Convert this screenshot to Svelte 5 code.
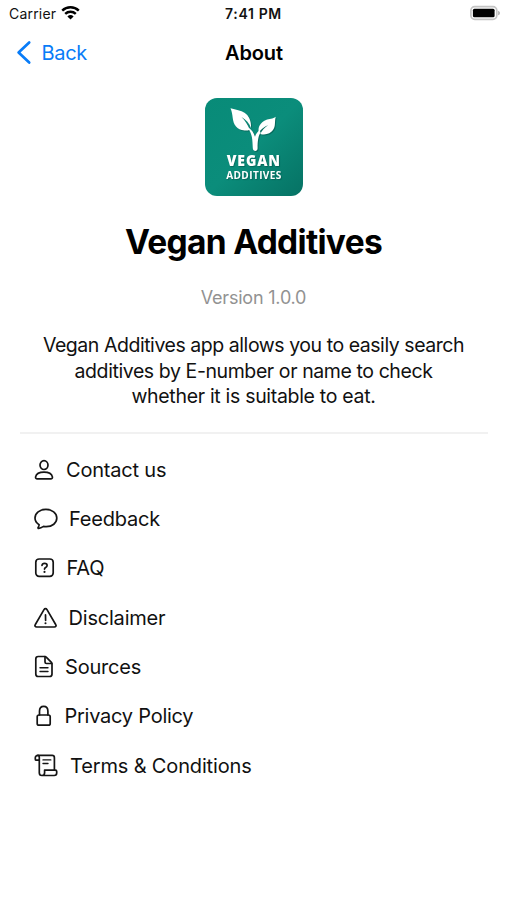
<script>
  const items = [
    { icon: 'person', label: 'Contact us', width: 20, gap: 12 },
    { icon: 'bubble', label: 'Feedback', width: 24, gap: 11 },
    { icon: 'question', label: 'FAQ', width: 21, gap: 11.5 },
    { icon: 'warning', label: 'Disclaimer', width: 23, gap: 11.5 },
    { icon: 'document', label: 'Sources', width: 20, gap: 11 },
    { icon: 'lock', label: 'Privacy Policy', width: 20, gap: 10.5 },
    { icon: 'scroll', label: 'Terms & Conditions', width: 24, gap: 12 }
  ];
</script>

<main class="screen">
  <div class="status">
    <div class="carrier">
      <span>Carrier</span>
      <svg width="19" height="14" viewBox="0 0 19 14" fill="none" stroke="#000" stroke-width="2.4">
        <path d="M1.2 4.6a12 12 0 0 1 16.6 0M4.2 7.900a7.6 7.6 0 0 1 10.6 0" />
        <path d="M9.5 13.4 6.4 10.4a4.6 4.6 0 0 1 6.2 0Z" fill="#000" stroke="none" />
      </svg>
    </div>
    <span class="time">7:41 PM</span>
    <div class="battery">
      <svg width="32" height="16" viewBox="0 0 32 16">
        <rect x="1.9" y="1.700" width="25.900" height="12.6" rx="3.8" fill="#fff" stroke="#c4c4c4" stroke-width="1.7" />
        <rect x="3.900" y="3.700" width="21.700" height="8.6" rx="1.5" fill="#000" />
        <path d="M29.2 5.7c2.2.8 2.2 3.8 0 4.6Z" fill="#aaa" />
      </svg>
    </div>
  </div>

  <nav>
    <div class="back">
      <svg width="16" height="25" viewBox="0 0 16 25" fill="none" stroke="#087cf8" stroke-width="2.7" stroke-linecap="round" stroke-linejoin="round">
        <path d="M13.2 2.4 2.6 12.5l10.6 10.1" />
      </svg>
      <span>Back</span>
    </div>
    <span class="heading">About</span>
    <div></div>
  </nav>

  <div class="logo">
    <svg width="48" height="46" viewBox="0 0 48 46" fill="#fff">
      <path d="M.5 1.300C6 3 11 3.500 14.500 5.700c4.500 2.800 6.800 8 6.600 15.600C19.500 16.500 16 12.500 11.500 10c3.600 3.600 6.500 8 8.200 12.700-1.500.8-3.200.9-5.200.8C10.500 23.100 7.800 21.700 6 19.500 1.700 14.400 3.500 8 .5 1.300Z" />
      <path d="M45.700 9.700c-1.300 5 .2 9.500-2.700 13.300-2.400 3.600-7.500 5.400-12.800 3.900 1.800-3.400 4.500-6.400 8-8.900-4 1.900-7.200 4.200-9.400 7.400-1.100-5.400 1.400-9.700 7.200-12.400 3.200-1.500 7-.9 9.700-3.300Z" />
      <path d="M18.500 20.500c3.300 2.400 5.300 5.500 6.500 9.300.9-3 2.300-4.600 4.200-6.300l1.500 1.700c-2.500 4-3.100 8.400-3.100 16 0 3.600-4.500 3.600-4.800 0-.3-8-.4-14.500-4.800-19.700Z" />
    </svg>
    <span class="vegan">VEGAN</span>
    <span class="additives">ADDITIVES</span>
  </div>

  <h1>Vegan Additives</h1>
  <p class="version">Version 1.0.0</p>
  <p class="description">
    <span class="l1">Vegan Additives app allows you to easily search</span><br />
    <span class="l2">additives by E-number or name to check</span><br />
    <span class="l3">whether it is suitable to eat.</span>
  </p>

  <hr />

  <ul>
    {#each items as item}
      <li style="gap: {item.gap}px">
        <svg width={item.width} height="24" viewBox="0 0 {item.width} 24" fill="none" stroke="#151515" stroke-width="1.7" stroke-linecap="round" stroke-linejoin="round">
          {#if item.icon === 'person'}
            <ellipse cx="10" cy="7.100" rx="4" ry="4.400" />
            <path d="M3.300 20.800c-1.400 0-1.900-.8-1.700-1.900.6-2.700 4-4.700 8.400-4.700s7.800 2 8.400 4.700c.2 1.100-.3 1.900-1.700 1.900Z" />
          {:else if item.icon === 'bubble'}
            <path d="M11.900 2.400c6.200 0 10.900 3.800 10.900 8.700s-4.500 8.600-10.500 8.600c-1 0-1.900-.1-2.700-.3-1.400.9-3 1.900-4.800 2-.8 0-1-.6-.6-1.100.6-.8 1-1.700.9-2.600C2.600 16.200 1 14 1 11.100c0-4.900 4.700-8.700 10.900-8.700Z" />
          {:else if item.icon === 'question'}
            <rect x="1.800" y="3" width="17.400" height="17.400" rx="3.300" />
            <path d="M8 9.400c.2-1.300 1.100-2 2.500-2s2.600.8 2.600 2c0 1.100-.7 1.600-1.500 2.100-.8.500-1.100.9-1.100 1.600" />
            <circle cx="10.500" cy="15.900" r="1.050" fill="#151515" stroke="none" />
          {:else if item.icon === 'warning'}
            <path d="M10 3.600c.7-1.200 2.300-1.200 3 0l8.800 15.100c.7 1.100-.1 2.300-1.400 2.300H2.600c-1.300 0-2.100-1.200-1.400-2.300Z" />
            <path d="m11.500 8.900.1 5.400" />
            <circle cx="11.500" cy="17.300" r="1.050" fill="#151515" stroke="none" />
          {:else if item.icon === 'document'}
            <path d="M11 1.500H4.200C2.600 1.500 1.800 2.400 1.800 4v15c0 1.600.8 2.500 2.400 2.500h11.400c1.600 0 2.400-.9 2.400-2.500V8.700c0-.6-.2-1-.6-1.400l-5.200-5.200c-.4-.4-.7-.6-1.200-.6Z" />
            <path d="M11 1.700V7c0 1 .5 1.500 1.500 1.500h5.200" />
            <path d="M6 12.700h8M6 16.500h8" stroke-width="1.400" />
          {:else if item.icon === 'lock'}
            <rect x="3.200" y="11" width="13" height="10.200" rx="1.800" />
            <path d="M5.500 11V7.200c0-3 1.700-4.800 4.200-4.800s4.200 1.800 4.200 4.800V11" />
          {:else}
            <path d="M3.900 1.400h14.200c1.500 0 2.300.8 2.300 2.300v12.200M5.300 6.500v12.300c0 1.800.8 2.700 2.500 2.700h12.400c1.600 0 2.500-.8 2.500-2.400v-1.700c0-.8-.5-1.300-1.300-1.300H10.600v2.700c0 1.600-.9 2.700-2.600 2.700" />
            <path d="M3.800 1.400c-1.500 0-2.500.9-2.500 2.300v1.500c0 .7.300 1 1 1h3V3.500c0-1.300-.4-2.100-1.500-2.100Z" />
            <path d="M9 5.900h7.800M9 9.500h5" stroke-width="1.400" />
          {/if}
        </svg>
        <span class={item.icon}>{item.label}</span>
      </li>
    {/each}
  </ul>
</main>

<style>
  :global(body) { background: #fff; }
  .screen {
    width: 507px;
    height: 900px;
    overflow: hidden;
    background: #fff;
    color: #111;
    font-family: Inter, "Noto Sans", sans-serif;
    display: flex;
    flex-direction: column;
  }
  svg { display: block; flex: none; }
  .status, nav {
    display: grid;
    grid-template-columns: 1fr auto 1fr;
    align-items: center;
    box-sizing: border-box;
  }
  .status { height: 27px; padding: 0 6px 0 9px; font-size: 14px; }
  .carrier { display: flex; align-items: center; gap: 5px; letter-spacing: 0.2px; }
  .carrier svg { margin-bottom: 1px; }
  .time { font-size: 14px; font-weight: 600; letter-spacing: 0.65px; margin-right: 3px; }
  .battery { justify-self: end; margin-bottom: 1px; }
  nav { height: 51px; padding: 0 16px; font-size: 20px; }
  .back { display: flex; align-items: center; gap: 9.500px; color: #087cf8; letter-spacing: -0.3px; }
  .heading { font-weight: 600; color: #000; letter-spacing: -0.15px; padding-left: 1px; }
  .logo {
    width: 98px;
    height: 98px;
    margin: 20px auto 0;
    border-radius: 12px;
    background: linear-gradient(135deg, #088b78, #0b8d7b 50%, #067264);
    color: #fff;
    display: flex;
    flex-direction: column;
    align-items: center;
    box-sizing: border-box;
    padding-top: 9px;
    padding-left: 1px;
    font-family: "Open Sans", "Noto Sans", sans-serif;
    font-weight: 700;
    text-shadow: 1px 1px 1px #044d4488;
  }
  .logo svg { filter: drop-shadow(1px 1px 0.5px #044d4488); }
  .vegan { font-size: 16px; line-height: 15px; font-weight: 800; letter-spacing: 1px; transform: scaleX(0.88); }
  .additives { margin-top: 1px; font-size: 10.500px; line-height: 13px; letter-spacing: 0.4px; transform: scaleX(0.96); }
  h1 {
    margin: 25px 0 0;
    text-align: center;
    font-size: 33.500px;
    line-height: 42px;
    font-weight: 700;
    letter-spacing: -0.7px;
    color: #000;
  }
  p { margin: 0; text-align: center; }
  .version { margin-top: 23px; font-size: 18px; line-height: 24px; color: #929292; letter-spacing: -0.2px; }
  .description { margin-top: 23px; font-size: 19.500px; line-height: 25.700px; white-space: nowrap; }
  .l1 { letter-spacing: -0.45px; }
  .l2 { letter-spacing: -0.41px; }
  .l3 { letter-spacing: -0.31px; }
  hr { width: 468px; height: 2px; margin: 21.500px auto 0; border: 0; background: #f1f1f1; flex: none; }
  ul { list-style: none; margin: 11.500px 0 0; padding: 0 0 0 34px; }
  li { height: 49.300px; display: flex; align-items: center; font-size: 20px; letter-spacing: -0.2px; }
  .lock { letter-spacing: -0.25px; }
  .scroll { letter-spacing: -0.15px; }
</style>
